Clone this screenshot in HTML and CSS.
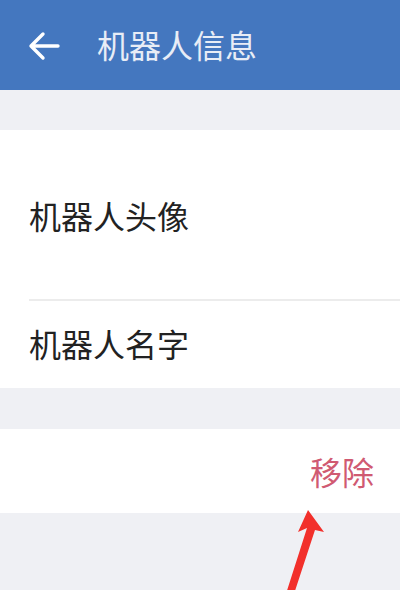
FILE: index.html
```html
<!DOCTYPE html>
<html lang="zh">

<head>
    <meta charset="UTF-8">
    <meta name="viewport" content="width=device-width, initial-scale=1.0">
    <title>机器人信息</title>
    <link rel="stylesheet" href="styles.css">
</head>

<body>
    <div class="header">
        <svg class="back" width="34" height="30" viewBox="0 0 34 30">
            <path d="M31 15H4M16 3L4 15l12 12" fill="none" stroke="#fff" stroke-width="3.4" stroke-linecap="round" stroke-linejoin="round"/>
        </svg>
        <div class="title">机器人信息</div>
    </div>
    <div class="gap"></div>
    <div class="group">
        <div class="row row-avatar">机器人头像</div>
        <div class="row row-name">机器人名字</div>
    </div>
    <div class="gap gap-small"></div>
    <div class="group">
        <div class="row row-remove">移除</div>
    </div>
    <div class="rest"></div>
    <svg class="pointer" width="60" height="90" viewBox="0 0 60 90">
        <path d="M38 2L54 24L45 22L22 92L14 92L37 20L28 24Z" fill="#f2302b"/>
    </svg>
</body>

</html>
```

FILE: styles.css
```css
html, body {
    margin: 0;
    padding: 0;
}

body {
    width: 400px;
    height: 590px;
    overflow: hidden;
    background: #eff0f4;
    font-family: "Noto Sans CJK SC", "Noto Sans", sans-serif;
    position: relative;
}

.header {
    height: 90px;
    background: #4477bf;
    display: flex;
    align-items: center;
    padding-left: 27px;
    box-sizing: border-box;
}

.header .back {
    margin-top: 2px;
}

.header .title {
    color: #e8edf6;
    font-size: 32px;
    margin-left: 36px;
    margin-top: -2px;
}

.gap {
    height: 40px;
}

.gap-small {
    height: 41px;
}

.group {
    background: #fff;
}

.row {
    font-size: 32px;
    color: #222;
    display: flex;
    align-items: center;
    margin-left: 29px;
}

.row-avatar {
    height: 169px;
    border-bottom: 2px solid #ececec;
}

.row-name {
    height: 87px;
    padding-bottom: 4px;
    box-sizing: border-box;
}

.row-remove {
    height: 84px;
    justify-content: flex-end;
    padding-right: 26px;
    color: #d05a72;
    font-size: 32px;
}

.pointer {
    position: absolute;
    left: 270px;
    top: 508px;
}
```
